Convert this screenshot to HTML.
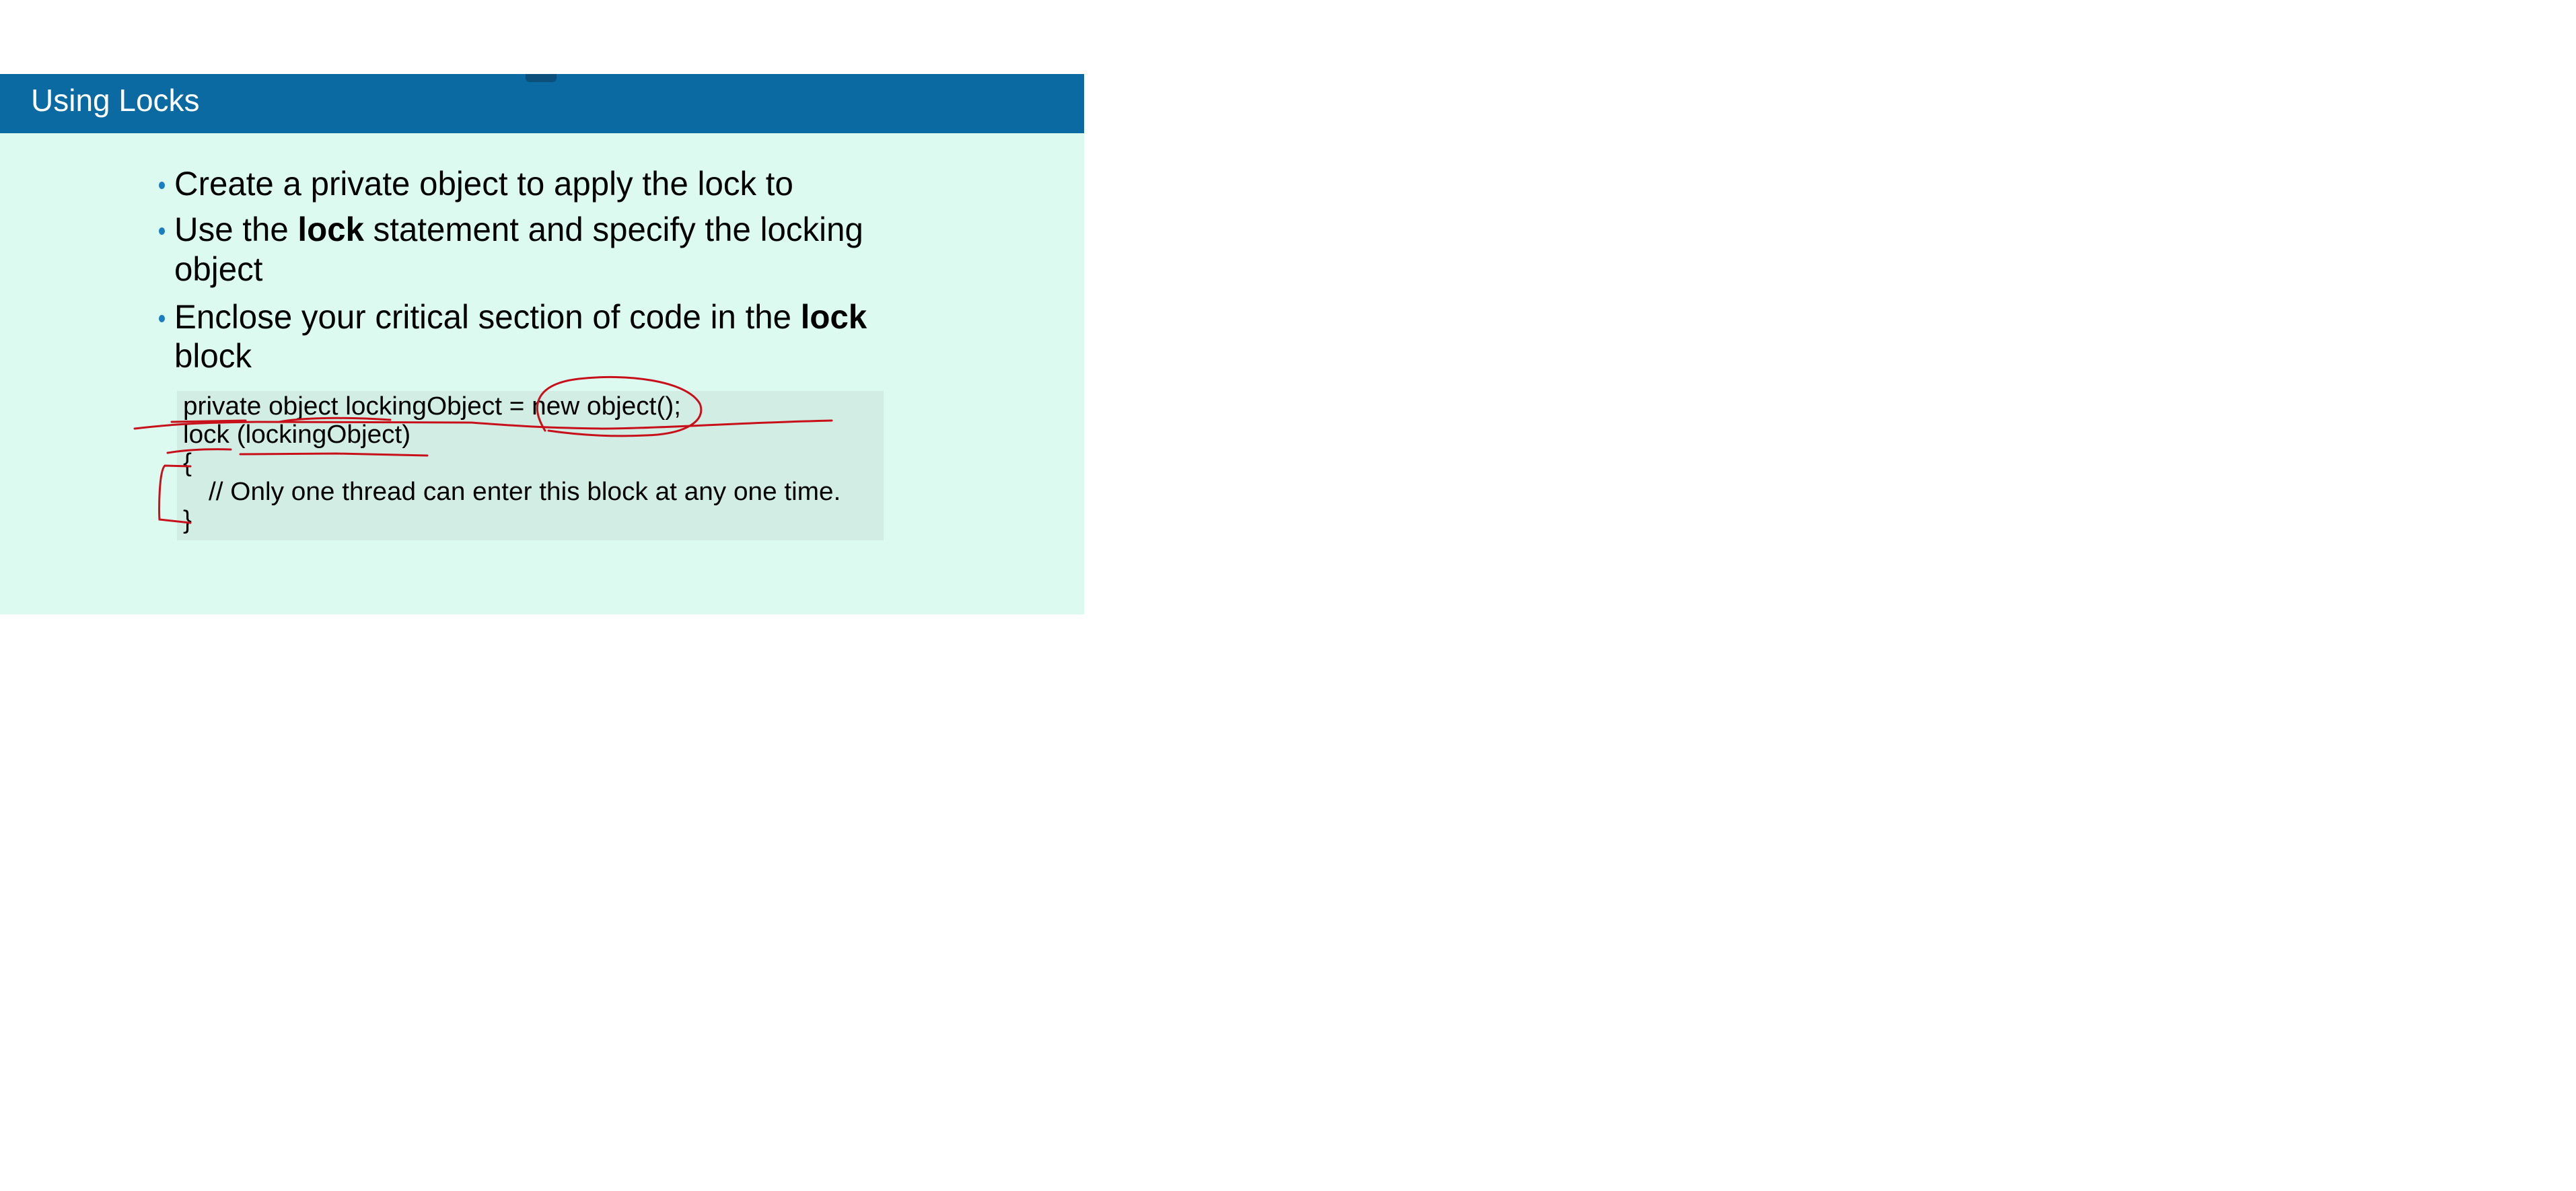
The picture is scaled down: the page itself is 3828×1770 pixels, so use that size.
<!DOCTYPE html>
<html><head><meta charset="utf-8"><style>
html,body{margin:0;padding:0;width:3828px;height:1770px;background:#fff;overflow:hidden}
body{position:relative;font-family:"Liberation Sans","DejaVu Sans",sans-serif}
.slide{position:absolute;left:0;top:110px;width:1611px;height:803px;background:#dcfaf0}
.hdr{position:absolute;left:0;top:110px;width:1611px;height:88px;background:#0a6aa1}
.title{position:absolute;left:46px;top:122px;font-size:46px;color:#fff;transform:scaleX(1.0);transform-origin:left}
.tab{position:absolute;left:781px;top:110px;width:46px;height:12px;background:#0b4f7a;border-radius:0 0 6px 6px}
.b{position:absolute;left:259px;font-size:50px;color:#000;white-space:nowrap;transform:scaleX(0.985);transform-origin:left;line-height:58px}
.dot{position:absolute;left:236px;width:9px;height:11px;border-radius:50%;background:#1a7ec0}
.code{position:absolute;left:263px;top:581px;width:1050px;height:222px;background:#d2ede3}
.c{position:absolute;left:272px;font-size:38px;white-space:nowrap;transform:scaleX(1.02);transform-origin:left;line-height:42px}
</style></head><body>
<div class="slide"></div>
<div class="hdr"></div>
<div class="tab"></div>
<div class="title">Using Locks</div>
<div class="dot" style="top:270px"></div>
<div class="b" style="top:244px">Create a private object to apply the lock to</div>
<div class="dot" style="top:338px"></div>
<div class="b" style="top:312px">Use the <b>lock</b> statement and specify the locking</div>
<div class="b" style="top:371px">object</div>
<div class="dot" style="top:468px"></div>
<div class="b" style="top:442px">Enclose your critical section of code in the <b>lock</b></div>
<div class="b" style="top:500px">block</div>
<div class="code"></div>
<div class="c" style="top:583px">private object lockingObject = new object();</div>
<div class="c" style="top:625px">lock (lockingObject)</div>
<div class="c" style="top:667px">{</div>
<div class="c" style="top:710px;left:310px">// Only one thread can enter this block at any one time.</div>
<div class="c" style="top:752px">}</div>
<svg style="position:absolute;left:0;top:0" width="1611" height="918" fill="none" stroke="#c8101a" stroke-width="3" stroke-linecap="round">
<path d="M200 637 C260 630 300 628 380 627 L700 628 C760 632 800 636 900 637 C1000 636 1100 628 1236 625"/>
<path d="M255 627 L365 625 M415 627 C450 620 520 620 580 624"/>
<path d="M810 640 C785 600 800 570 860 563 C930 555 1020 565 1040 600 C1050 625 1020 645 960 647 C900 650 850 645 815 640"/>
<path d="M249 673 C280 668 310 667 343 668 M357 675 L500 674 L635 677"/>
<path d="M283 693 L245 692 C236 700 236 760 237 772 L283 777"/>
</svg>
</body></html>
